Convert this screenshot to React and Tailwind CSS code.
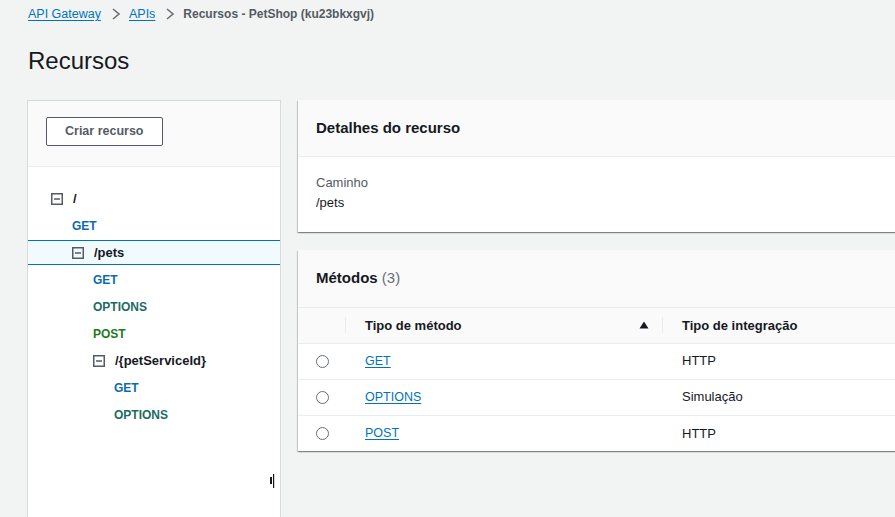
import React from 'react';

const font = { fontFamily: '"Liberation Sans", Arial, sans-serif' };

function Chevron() {
  return (
    <svg width="10" height="14" viewBox="0 0 10 14" className="ml-[10px] mr-[8px]">
      <polyline points="2,2 8,7 2,12" fill="none" stroke="#687078" strokeWidth="1.6" />
    </svg>
  );
}

function MinusBox() {
  return (
    <svg width="12" height="12" viewBox="0 0 12 12" className="shrink-0">
      <rect x="0.75" y="0.75" width="10.5" height="10.5" fill="none" stroke="#545b64" strokeWidth="1.5" />
      <line x1="3" y1="6" x2="9" y2="6" stroke="#545b64" strokeWidth="1.5" />
    </svg>
  );
}

const methodColor = {
  GET: 'text-[#0d6bad]',
  OPTIONS: 'text-[#1c6b5f]',
  POST: 'text-[#1d7a1d]',
};

// tree rows: kind 'res' shows the minus box, 'm' is a method
const tree = [
  { kind: 'res', label: '/', level: 0 },
  { kind: 'm', label: 'GET', level: 0 },
  { kind: 'res', label: '/pets', level: 1, selected: true },
  { kind: 'm', label: 'GET', level: 1 },
  { kind: 'm', label: 'OPTIONS', level: 1 },
  { kind: 'm', label: 'POST', level: 1 },
  { kind: 'res', label: '/{petServiceId}', level: 2 },
  { kind: 'm', label: 'GET', level: 2 },
  { kind: 'm', label: 'OPTIONS', level: 2 },
];

const indent = ['pl-[23px]', 'pl-[44px]', 'pl-[65px]'];
const methodIndent = ['pl-[44px]', 'pl-[65px]', 'pl-[86px]'];

function TreeRow({ row }) {
  if (row.kind === 'res') {
    return (
      <div
        className={
          'h-[25px] flex items-center gap-[10px] ' +
          indent[row.level] +
          (row.selected ? ' bg-[#f1faff] border-y border-[#0073bb]' : '')
        }
      >
        <MinusBox />
        <span className="text-[13px] font-bold text-[#16191f]">{row.label}</span>
      </div>
    );
  }
  return (
    <div className={'h-[25px] flex items-center ' + methodIndent[row.level]}>
      <span className={'text-[12px] font-bold ' + methodColor[row.label]}>{row.label}</span>
    </div>
  );
}

const methods = [
  { name: 'GET', integ: 'HTTP' },
  { name: 'OPTIONS', integ: 'Simulação' },
  { name: 'POST', integ: 'HTTP' },
];

const cardShadow =
  'bg-white shadow-[0_1px_1px_0_rgba(0,28,36,0.3),1px_1px_1px_0_rgba(0,28,36,0.15),-1px_1px_1px_0_rgba(0,28,36,0.15)]';

export default function App() {
  return (
    <div className="w-[895px] h-[517px] overflow-hidden bg-[#f2f3f3] pl-[27px] text-[#16191f]" style={font}>
      {/* breadcrumb */}
      <div className="h-[28px] pl-px flex items-center text-[12.5px]">
        <a className="text-[#0073bb] underline underline-offset-2">API Gateway</a>
        <Chevron />
        <a className="text-[#0073bb] underline underline-offset-2">APIs</a>
        <Chevron />
        <span className="font-bold text-[#545b64] text-[12px]">Recursos - PetShop (ku23bkxgvj)</span>
      </div>

      <h1 className="mt-[18px] pl-px text-[24px] leading-[30px] text-[#16191f]">Recursos</h1>

      <div className="mt-[24px] flex gap-[17px] w-[1300px]">
        {/* resource tree panel */}
        <div className="relative w-[254px] h-[430px] shrink-0 bg-white border border-[#d5dbdb]">
          <div className="bg-[#fafafa] border-b border-[#eaeded] pt-[16px] pb-[20px] pl-[18px]">
            <button className="h-[29px] px-[18px] bg-white border border-[#545b64] rounded-[2px] text-[12.5px] font-bold text-[#545b64]">
              Criar recurso
            </button>
          </div>
          <div className="pt-[19px] flex flex-col gap-[2px]">
            {tree.map((row, i) => (
              <TreeRow key={i} row={row} />
            ))}
          </div>
          <svg width="6" height="15" viewBox="0 0 6 15" className="absolute left-[242px] top-[373px]">
            <rect x="0" y="3" width="2" height="7" fill="#16191f" />
            <rect x="3" y="0" width="1.2" height="14" fill="#16191f" />
          </svg>
        </div>

        {/* right column */}
        <div className="w-[700px] flex flex-col gap-[18px]">
          <div className={cardShadow + ' h-[132px]'}>
            <div className="h-[57px] bg-[#fafafa] border-b border-[#eaeded] flex items-center pl-[18px]">
              <h2 className="text-[15px] font-bold">Detalhes do recurso</h2>
            </div>
            <div className="pl-[18px] pt-[16px]">
              <div className="text-[13px] text-[#545b64] leading-[20px]">Caminho</div>
              <div className="text-[13px] leading-[20px]">/pets</div>
            </div>
          </div>

          <div className={cardShadow}>
            <div className="h-[58px] bg-[#fafafa] border-b border-[#eaeded] flex items-center pl-[18px]">
              <h2 className="text-[15px] font-bold">
                Métodos <span className="font-normal text-[#687078]">(3)</span>
              </h2>
            </div>
            <table className="w-full border-collapse text-[13px]">
              <thead>
                <tr className="h-[35px] bg-[#fafafa]">
                  <th className="w-[48px] p-0">
                    <div className="ml-auto w-px h-[16px] bg-[#eaeded]" />
                  </th>
                  <th className="w-[317px] p-0 font-bold text-left">
                    <div className="flex items-center pl-[19px]">
                      <span className="flex-1">Tipo de método</span>
                      <svg width="10" height="8" viewBox="0 0 10 8" className="mr-[13px]">
                        <polygon points="5,0.5 9.5,7.5 0.5,7.5" fill="#16191f" />
                      </svg>
                      <div className="w-px h-[16px] bg-[#eaeded]" />
                    </div>
                  </th>
                  <th className="p-0 pl-[19px] font-bold text-left">Tipo de integração</th>
                </tr>
              </thead>
              <tbody>
                {methods.map((m) => (
                  <tr key={m.name} className="h-[36px] border-t border-[#eaeded]">
                    <td className="p-0">
                      <div className="ml-[18px] w-[13px] h-[13px] rounded-full border-[1.5px] border-[#687078]" />
                    </td>
                    <td className="p-0 pl-[19px]">
                      <a className="text-[#0073bb] underline underline-offset-2 text-[12.5px]">{m.name}</a>
                    </td>
                    <td className="p-0 pl-[19px]">{m.integ}</td>
                  </tr>
                ))}
              </tbody>
            </table>
          </div>
        </div>
      </div>
    </div>
  );
}
